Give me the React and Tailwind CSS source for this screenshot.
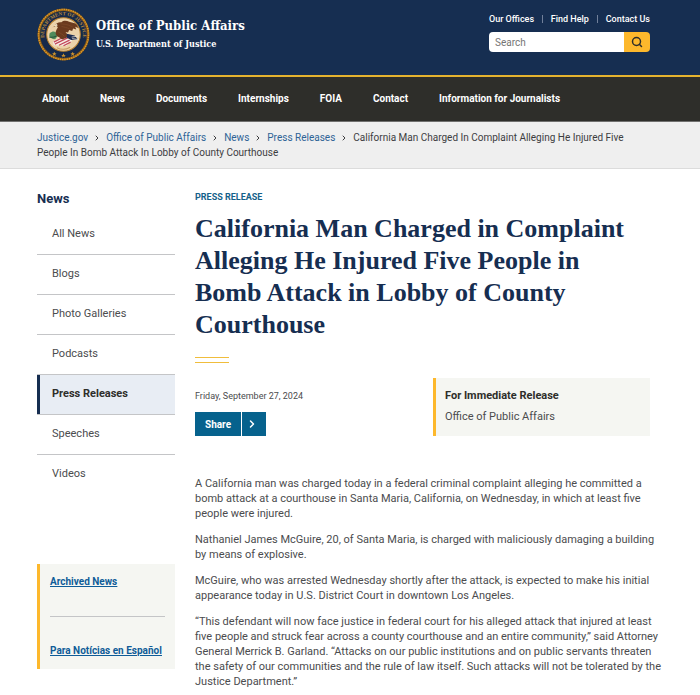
import { FiChevronRight, FiSearch } from "react-icons/fi";

const utilityLinks = ["Our Offices", "Find Help", "Contact Us"];

const mainLinks = [
  "About",
  "News",
  "Documents",
  "Internships",
  "FOIA",
  "Contact",
  "Information for Journalists",
];

const crumbs = ["Justice.gov", "Office of Public Affairs", "News", "Press Releases"];

const sideLinks = [
  "All News",
  "Blogs",
  "Photo Galleries",
  "Podcasts",
  "Press Releases",
  "Speeches",
  "Videos",
];

const paragraphs = [
  "A California man was charged today in a federal criminal complaint alleging he committed a bomb attack at a courthouse in Santa Maria, California, on Wednesday, in which at least five people were injured.",
  "Nathaniel James McGuire, 20, of Santa Maria, is charged with maliciously damaging a building by means of explosive.",
  "McGuire, who was arrested Wednesday shortly after the attack, is expected to make his initial appearance today in U.S. District Court in downtown Los Angeles.",
  "“This defendant will now face justice in federal court for his alleged attack that injured at least five people and struck fear across a county courthouse and an entire community,” said Attorney General Merrick B. Garland. “Attacks on our public institutions and on public servants threaten the safety of our communities and the rule of law itself. Such attacks will not be tolerated by the Justice Department.”",
];

function Seal() {
  return (
    <svg viewBox="0 0 104 104" className="w-[53px] h-[53px] shrink-0" aria-hidden="true">
      <circle cx="52" cy="52" r="51" fill="#8a5a16" />
      <circle cx="52" cy="52" r="49" fill="none" stroke="#d9972a" strokeWidth="3" strokeDasharray="3 1.5" />
      <circle cx="52" cy="52" r="46" fill="#16294a" />
      <circle cx="52" cy="52" r="33" fill="#ecd2aa" stroke="#b98130" strokeWidth="2" />
      <path id="seal-ring" d="M20 73 A38 38 0 1 1 84 73" fill="none" />
      <text fill="#b98a3c" className="font-['Liberation_Serif',serif] text-[10px] font-bold">
        <textPath href="#seal-ring" startOffset="50%" textAnchor="middle">
          DEPARTMENT OF JUSTICE
        </textPath>
      </text>
      {/* olive branch */}
      <path d="M25 49c4-3 8-4 11-2l5 7-5 7c-5 1-9-2-12-6z" fill="#4f8a5c" />
      <path d="M24 57c5 1 9 1 14-2" stroke="#27533b" strokeWidth="2" fill="none" />
      {/* shield */}
      <path d="M31 66l26-15 12 13-11 10-25-1z" fill="#f6efe6" />
      <path d="M33 67l23-12M35 71l26-13M43 73l21-10M52 74l14-7" stroke="#c3475a" strokeWidth="2.5" />
      <path d="M56 50l18 4 6 8-13 1-11-6z" fill="#1c2c52" />
      <path d="M68 57l14-2M69 60l13 2" stroke="#eee4d2" strokeWidth="1.5" />
      {/* eagle */}
      <path
        d="M35 35c2-6 8-8 13-7 4-4 11-3 15-1l11 3c4 2 6 5 7 9l-6-2 2 5-6-2-2 5-6-2-2 5-5-1c3 3 4 8 1 12l-8 3-6-5c-6-2-8-8-5-14l3-5-3-3-7 3-3 2z"
        fill="#6b3a1e"
      />
      <path d="M46 31c6 1 12 0 24 6M48 36c6 2 10 2 16 5M42 47c4 3 8 4 12 9" stroke="#7e4a28" strokeWidth="1.5" fill="none" />
      <path d="M33 35l5-4 3 3-4 2z" fill="#efe0c4" />
      <path d="M39 78c8 4 18 4 26-1" stroke="#c49b63" strokeWidth="2" fill="none" />
      <g fill="#c8902f">
        <path d="M34 86l1.500 3h3l-2.500 2 1 3-3-2-3 2 1-3-2.500-2h3z" />
        <path d="M52 89l1.500 3h3l-2.500 2 1 3-3-2-3 2 1-3-2.500-2h3z" />
        <path d="M70 86l1.500 3h3l-2.500 2 1 3-3-2-3 2 1-3-2.500-2h3z" />
      </g>
    </svg>
  );
}

function Header() {
  return (
    <header className="bg-[#162e51] border-b-2 border-[#e5b32f]">
      <div className="flex justify-between pl-[37px] pr-[50px] pt-2 pb-3.5">
        <a href="#" className="flex items-center gap-1.5 text-white font-['DejaVu_Serif_Condensed','DejaVu_Serif',serif] font-bold">
          <Seal />
          <span className="flex flex-col">
            <span className="text-[13px] leading-[18px]">Office of Public Affairs</span>
            <span className="text-[9px] leading-[18px]">U.S. Department of Justice</span>
          </span>
        </a>
        <div className="w-[161px] pt-1">
          <ul className="flex justify-between text-[9px] leading-[14px] font-medium text-white">
            {utilityLinks.map((label, i) => (
              <li key={label} className="flex items-center whitespace-nowrap">
                {i > 0 && <span className="w-px h-2 mr-2 bg-[#71809a]" />}
                <a href="#">{label}</a>
              </li>
            ))}
          </ul>
          <form className="flex h-5 mt-1.5 rounded-sm overflow-hidden">
            <input
              type="search"
              aria-label="Search"
              placeholder="Search"
              className="flex-1 min-w-0 px-1.5 bg-white text-[10px] text-[#333] placeholder:text-[#757575]"
            />
            <button type="button" aria-label="Submit search" className="w-[26px] flex items-center justify-center bg-[#fdb82c] text-[#2e2e2a]">
              <FiSearch size={12} strokeWidth={3} />
            </button>
          </form>
        </div>
      </div>
    </header>
  );
}

function SideNav() {
  return (
    <aside className="w-[138px] shrink-0">
      <h2 className="text-[13px] leading-5 font-bold text-[#162e51]">News</h2>
      <ul className="mt-1.5 divide-y divide-[#c4c5c7]">
        {sideLinks.map((label) => (
          <li key={label}>
            {label === "Press Releases" ? (
              <a
                href="#"
                aria-current="page"
                className="flex items-center h-[39px] pl-3 border-l-3 border-[#162e51] bg-[#e8edf4] text-[11px] font-bold text-[#2e2e2a]"
              >
                {label}
              </a>
            ) : (
              <a href="#" className="flex items-center h-[39px] pl-[15px] text-[11px] text-[#4b4c4e]">
                {label}
              </a>
            )}
          </li>
        ))}
      </ul>
      <div className="mt-[70px] px-2.5 py-2.5 border-l-3 border-[#fdb82c] bg-[#f5f6f2] text-[10px] leading-4 font-bold text-[#0f5c98] underline">
        <a href="#" className="block">Archived News</a>
        <hr className="my-[26px] border-[#c4c5c7]" />
        <a href="#" className="block whitespace-nowrap">Para Notícias en Español</a>
      </div>
    </aside>
  );
}

function Article() {
  return (
    <main className="flex-1 min-w-0">
      <p className="text-[9px] leading-4 font-bold text-[#14618a] uppercase">Press Release</p>
      <h1 className="mt-2 font-['Liberation_Serif',serif] text-[26px] leading-8 font-bold text-[#162e51]">
        California Man Charged in Complaint Alleging He Injured Five People in Bomb Attack in Lobby of County Courthouse
      </h1>
      <div className="w-[34px] h-[6px] mt-4 border-y border-[#f0bd3c]" />
      <div className="flex justify-between mt-[15px]">
        <div className="pt-2.5">
          <p className="text-[9px] leading-4 text-[#4b4c4e]">Friday, September 27, 2024</p>
          <button type="button" className="flex items-stretch h-6 mt-2 bg-[#06628d] text-white text-[10px] font-bold">
            <span className="flex items-center w-[46px] pl-2.5">Share</span>
            <span className="flex items-center justify-center w-[25px] pr-1 border-l border-white">
              <FiChevronRight size={12} strokeWidth={3} />
            </span>
          </button>
        </div>
        <div className="w-[217px] h-[58px] pl-[9px] pt-2 border-l-3 border-[#fdb82c] bg-[#f5f6f2] text-[11px] text-[#4b4c4e]">
          <h2 className="leading-5 font-bold text-[#2e2e2a]">For Immediate Release</h2>
          <p className="leading-[22px]">Office of Public Affairs</p>
        </div>
      </div>
      <div className="flex flex-col gap-[11px] mt-10 -mr-4 text-[11px] leading-[15px] text-[#4b4c4e]">
        {paragraphs.map((text) => (
          <p key={text}>{text}</p>
        ))}
      </div>
    </main>
  );
}

function App() {
  return (
    <div className="bg-white font-['Roboto',sans-serif]">
      <Header />
      <nav className="bg-[#2e2e2a] border-b border-[#71716f]">
        <ul className="flex gap-[31px] pl-[42px] text-[10px] leading-[44px] font-bold text-white whitespace-nowrap">
          {mainLinks.map((label) => (
            <li key={label}>
              <a href="#">{label}</a>
            </li>
          ))}
        </ul>
      </nav>
      <nav aria-label="Breadcrumb" className="pl-[37px] pr-[50px] pt-2 pb-2 bg-[#efefef] border-b border-[#dcdcdc]">
        <ol className="text-[10px] leading-[15px] text-[#3d3d3f]">
          {crumbs.map((label) => (
            <li key={label} className="inline">
              <a href="#" className="text-[#2e6396]">{label}</a>
              <FiChevronRight size={8} strokeWidth={3} className="inline mx-[5px]" />
            </li>
          ))}
          <li className="inline" aria-current="page">
            California Man Charged In Complaint Alleging He Injured Five People In Bomb Attack In Lobby of County Courthouse
          </li>
        </ol>
      </nav>
      <div className="flex gap-5 pl-[37px] pr-[50px] pt-5">
        <SideNav />
        <Article />
      </div>
    </div>
  );
}

export default App;
